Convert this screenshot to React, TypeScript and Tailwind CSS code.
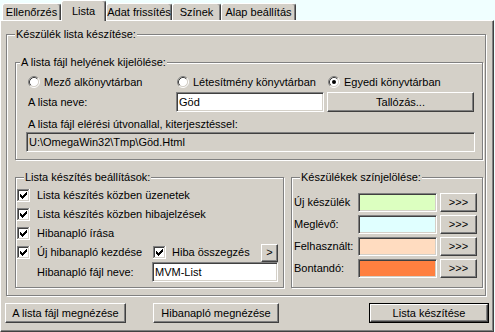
import React from "react";

const raised =
  "border border-t-white border-l-white border-b-[#404040] border-r-[#404040] shadow-[inset_-1px_-1px_0_#808080] bg-[#d4d0c8]";
const sunken =
  "border border-t-[#808080] border-l-[#808080] border-b-white border-r-white shadow-[inset_1px_1px_0_#404040,inset_-1px_-1px_0_#d4d0c8]";

function Group({
  label,
  labelLeft = "left-[8px]",
  className,
  children,
}: {
  label: string;
  labelLeft?: string;
  className: string;
  children?: React.ReactNode;
}) {
  return (
    <div
      className={`relative border border-[#808080] shadow-[inset_1px_1px_0_#fff,1px_1px_0_#fff] ${className}`}
    >
      <span className={`absolute -top-[8px] ${labelLeft} bg-[#d4d0c8] px-[1px] leading-[14px] whitespace-nowrap`}>
        {label}
      </span>
      {children}
    </div>
  );
}

function Radio({checked}: {checked?: boolean}) {
  return (
    <svg width="12" height="12" viewBox="0 0 12 12" className="shrink-0">
      <circle cx="6" cy="6" r="4.5" fill="#fff" />
      <path d="M2.11 9.89 A5.5 5.5 0 0 1 9.89 2.11" fill="none" stroke="#808080" />
      <path d="M9.89 2.11 A5.5 5.5 0 0 1 2.11 9.89" fill="none" stroke="#fff" />
      <path d="M2.82 9.18 A4.5 4.5 0 0 1 9.18 2.82" fill="none" stroke="#404040" />
      <path d="M9.18 2.82 A4.5 4.5 0 0 1 2.82 9.18" fill="none" stroke="#d4d0c8" />
      {checked && <circle cx="6" cy="6" r="2" fill="#000" />}
    </svg>
  );
}

function Check() {
  return (
    <svg width="13" height="13" viewBox="0 0 13 13" shapeRendering="crispEdges" className="shrink-0">
      <path d="M0 0h12v1H1v11H0z" fill="#808080" />
      <path d="M12 0h1v13H0v-1h12z" fill="#fff" />
      <path d="M1 1h10v1H2v9H1z" fill="#404040" />
      <path d="M11 1h1v11H1v-1h10z" fill="#d4d0c8" />
      <rect x="2" y="2" width="9" height="9" fill="#fff" />
      <path
        d="M3 5h1v3h-1z M4 6h1v3h-1z M5 7h1v3h-1z M6 6h1v3h-1z M7 5h1v3h-1z M8 4h1v3h-1z M9 3h1v3h-1z"
        fill="#000"
      />
    </svg>
  );
}

function Tab({label, width, active}: {label: string; width: string; active?: boolean}) {
  return (
    <div
      className={`${width} flex items-center justify-center bg-[#d4d0c8] border-t border-l border-r border-t-white border-l-white border-r-[#404040] shadow-[inset_-1px_0_0_#808080] rounded-t-[3px] ${
        active ? "h-[21px]" : "h-[17px] mb-[1px]"
      }`}
    >
      {label}
    </div>
  );
}

const swatches = [
  {label: "Új készülék", color: "bg-[#dcffc0]"},
  {label: "Meglévő:", color: "bg-[#e0ffff]"},
  {label: "Felhasznált:", color: "bg-[#ffdcc0]"},
  {label: "Bontandó:", color: "bg-[#ff8040]"},
];

export default function App() {
  return (
    <div className="w-[495px] h-[332px] bg-[#f0ffff] overflow-hidden text-[11px] text-black font-['Liberation_Sans',Arial,sans-serif] leading-[13px] select-none">
      <div className="relative z-10 flex items-end h-[21px] pl-[2px]">
        <Tab label="Ellenőrzés" width="w-[59px]" />
        <Tab label="Lista" width="w-[45px]" active />
        <Tab label="Adat frissítés" width="w-[66px]" />
        <Tab label="Színek" width="w-[49px]" />
        <Tab label="Alap beállítás" width="w-[75px]" />
      </div>

      <div className="-mt-[1px] w-[494px] h-[312px] bg-[#d4d0c8] border border-t-white border-l-white border-b-[#404040] border-r-[#404040] shadow-[inset_-1px_-1px_0_#808080] pl-[5px] pt-[13px]">
        <Group label="Készülék lista készítése:" className="w-[480px] h-[262px]">
          <Group
            label="A lista fájl helyének kijelölése:"
            labelLeft="left-[4px]"
            className="ml-[8px] mt-[27px] w-[468px] h-[98px]"
          >
            <div className="flex items-center h-[12px] mt-[13px] pl-[12px] leading-[12px]">
              <div className="flex items-center gap-[4px] w-[149px]">
                <Radio />
                <span>Mező alkönyvtárban</span>
              </div>
              <div className="flex items-center gap-[4px] w-[151px]">
                <Radio />
                <span>Létesítmény könyvtárban</span>
              </div>
              <div className="flex items-center gap-[4px]">
                <Radio checked />
                <span>Egyedi könyvtárban</span>
              </div>
            </div>

            <div className="flex items-center h-[20px] mt-[4px] pl-[12px]">
              <span className="w-[148px]">A lista neve:</span>
              <div className={`${sunken} bg-white w-[148px] h-[20px] pl-[2px] flex items-center`}>Göd</div>
              <button className={`${raised} ml-[3px] w-[147px] h-[20px] flex items-center justify-center`}>
                Tallózás...
              </button>
            </div>

            <div className="mt-[6px] pl-[12px] h-[13px]">A lista fájl elérési útvonallal, kiterjesztéssel:</div>
            <div className={`${sunken} ml-[10px] mt-[1px] w-[449px] h-[20px] pl-[2px] flex items-center`}>
              U:\OmegaWin32\Tmp\Göd.Html
            </div>
          </Group>

          <div className="flex mt-[17px] ml-[8px]">
            <Group label="Lista készítés beállítások:" className="w-[269px] h-[111px]">
              <div className="flex flex-col mt-[8px] pl-[1px]">
                <div className="flex items-center gap-[7px] h-[19px]">
                  <Check />
                  <span>Lista készítés közben üzenetek</span>
                </div>
                <div className="flex items-center gap-[7px] h-[19px]">
                  <Check />
                  <span>Lista készítés közben hibajelzések</span>
                </div>
                <div className="flex items-center gap-[7px] h-[19px]">
                  <Check />
                  <span>Hibanapló írása</span>
                </div>
                <div className="flex items-center h-[19px]">
                  <div className="flex items-center gap-[7px] w-[136px]">
                    <Check />
                    <span>Új hibanapló kezdése</span>
                  </div>
                  <div className="flex items-center gap-[6px] w-[108px]">
                    <Check />
                    <span>Hiba összegzés</span>
                  </div>
                  <button className={`${raised} w-[17px] h-[18px] flex items-center justify-center`}>&gt;</button>
                </div>
                <div className="flex items-center h-[20px] pl-[20px]">
                  <span className="w-[115px]">Hibanapló fájl neve:</span>
                  <div className={`${sunken} bg-white w-[126px] h-[20px] pl-[2px] flex items-center`}>MVM-List</div>
                </div>
              </div>
            </Group>

            <Group label="Készülékek színjelölése:" className="ml-[7px] w-[192px] h-[111px]">
              <div className="flex flex-col gap-[3px] mt-[15px] pl-[2px]">
                {swatches.map((s) => (
                  <div key={s.label} className="flex items-center h-[19px]">
                    <span className="w-[64px]">{s.label}</span>
                    <div className={`${sunken} ${s.color} w-[79px] h-[19px]`} />
                    <button className={`${raised} ml-[3px] w-[37px] h-[19px] flex items-center justify-center`}>
                      &gt;&gt;&gt;
                    </button>
                  </div>
                ))}
              </div>
            </Group>
          </div>
        </Group>

        <div className="flex mt-[7px] -ml-[1px] h-[20px]">
          <button className={`${raised} w-[121px] h-[20px] flex items-center justify-center`}>
            A lista fájl megnézése
          </button>
          <button className={`${raised} ml-[27px] w-[126px] h-[20px] flex items-center justify-center`}>
            Hibanapló megnézése
          </button>
          <div className="ml-[90px] w-[120px] h-[20px] border border-black">
            <button className={`${raised} w-full h-full flex items-center justify-center`}>Lista készítése</button>
          </div>
        </div>
      </div>
    </div>
  );
}
